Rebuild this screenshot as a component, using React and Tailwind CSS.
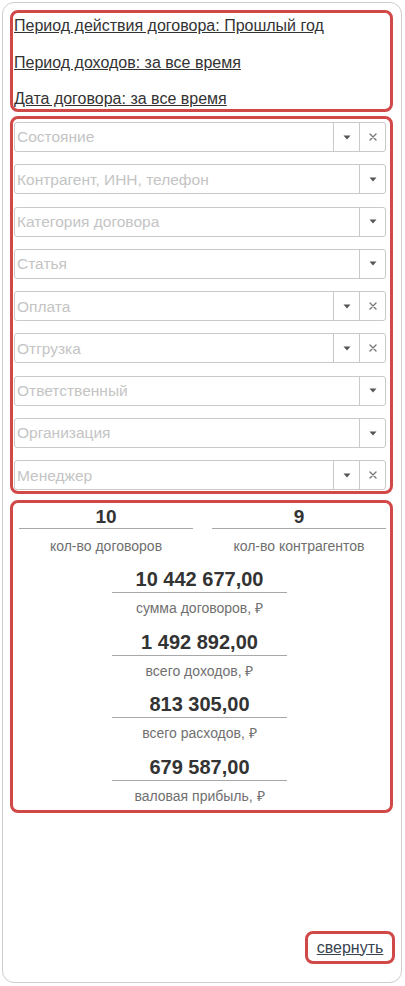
import React from 'react';

const filters = [
  { label: 'Состояние', clear: true },
  { label: 'Контрагент, ИНН, телефон', clear: false },
  { label: 'Категория договора', clear: false },
  { label: 'Статья', clear: false },
  { label: 'Оплата', clear: true },
  { label: 'Отгрузка', clear: true },
  { label: 'Ответственный', clear: false },
  { label: 'Организация', clear: false },
  { label: 'Менеджер', clear: true },
];

const totals = [
  { value: '10 442 677,00', label: 'сумма договоров, ₽' },
  { value: '1 492 892,00', label: 'всего доходов, ₽' },
  { value: '813 305,00', label: 'всего расходов, ₽' },
  { value: '679 587,00', label: 'валовая прибыль, ₽' },
];

const Caret = () => (
  <svg width="8" height="5" viewBox="0 0 8 5">
    <path d="M0.5 0.5 L7.5 0.5 L4 4.5 Z" fill="#555" />
  </svg>
);

const Cross = () => (
  <svg width="8" height="8" viewBox="0 0 8 8">
    <path d="M1 1 L7 7 M7 1 L1 7" stroke="#777" strokeWidth="1.4" strokeLinecap="round" />
  </svg>
);

const FilterField = ({ label, clear }) => (
  <div className="flex h-[30px] items-stretch rounded-[3px] border border-[#c9c9c9] bg-white">
    <div className="flex flex-1 items-center pl-[2px] text-[15.5px] text-[#c4c4c4] truncate">{label}</div>
    <div className="flex w-[26px] items-center justify-center border-l border-[#c9c9c9]">
      <Caret />
    </div>
    {clear && (
      <div className="flex w-[26px] items-center justify-center border-l border-[#c9c9c9]">
        <Cross />
      </div>
    )}
  </div>
);

export default function App() {
  return (
    <div
      className="ml-[2px] mt-[2px] flex h-[981px] w-[400px] flex-col rounded-[12px] border border-[#cdcdcd] bg-white pl-[7px] pr-[8px] pt-[7px]"
      style={{ fontFamily: '"Liberation Sans", Arial, sans-serif' }}
    >
      {/* Periods */}
      <div className="flex h-[102px] flex-col gap-[18.5px] rounded-[8px] border-[3px] border-[#d04848] pl-[1px] pt-[4px]">
        <a className="text-[16px] leading-[18px] text-[#333] underline">Период действия договора: Прошлый год</a>
        <a className="text-[16px] leading-[18px] text-[#333] underline">Период доходов: за все время</a>
        <a className="text-[16px] leading-[18px] text-[#333] underline">Дата договора: за все время</a>
      </div>

      {/* Filters */}
      <div className="mt-[4px] flex h-[378px] flex-col gap-[12.3px] rounded-[8px] border-[3px] border-[#d04848] pl-[1px] pr-[4px] pt-[3px]">
        {filters.map((f) => (
          <FilterField key={f.label} label={f.label} clear={f.clear} />
        ))}
      </div>

      {/* Summary */}
      <div className="mt-[6px] h-[313px] rounded-[8px] border-[3px] border-[#d04848] pl-[6px] pr-[4px] pt-[3px]">
        <div className="grid grid-cols-2 gap-[19px]">
          {[
            { value: '10', label: 'кол-во договоров' },
            { value: '9', label: 'кол-во контрагентов' },
          ].map((s) => (
            <div key={s.label} className="flex flex-col items-center">
              <div className="h-[23px] w-full border-b border-[#a8a8a8] text-center text-[19px] font-bold leading-[22px] text-[#333]">
                {s.value}
              </div>
              <div className="mt-[8px] h-[18px] text-[14px] leading-[18px] text-[#707070]">{s.label}</div>
            </div>
          ))}
        </div>
        {totals.map((t, i) => (
          <div
            key={t.value}
            className={`ml-[93px] flex w-[175px] flex-col items-center ${i === 0 ? 'mt-[13px]' : 'mt-[13.5px]'}`}
          >
            <div className="h-[25px] w-full border-b border-[#a8a8a8] text-center text-[20px] font-bold leading-[22px] text-[#333]">
              {t.value}
            </div>
            <div className="mt-[6px] h-[18px] text-[14px] leading-[18px] text-[#707070]">{t.label}</div>
          </div>
        ))}
      </div>

      <div className="mb-[18px] mt-auto flex justify-end">
        <div className="-mr-[2px] flex h-[33px] w-[90px] items-center justify-center rounded-[8px] border-[3px] border-[#d04848]">
          <a className="text-[16px] text-[#3a4450] underline">свернуть</a>
        </div>
      </div>
    </div>
  );
}
